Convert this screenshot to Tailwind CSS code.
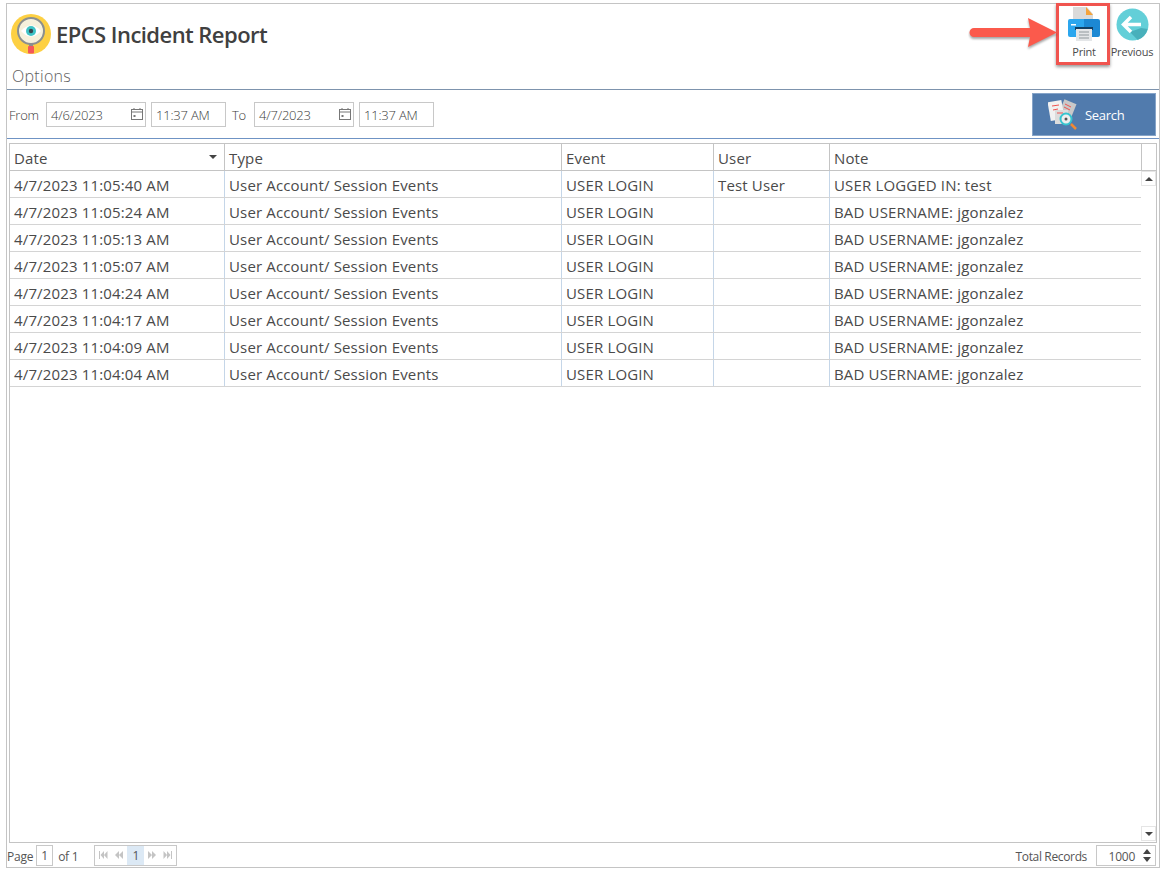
<!DOCTYPE html>
<html lang="en">
<head>
    <meta charset="UTF-8">
    <title>EPCS Incident Report</title>
    <script src="https://cdn.jsdelivr.net/npm/@tailwindcss/browser@4"></script>
</head>
<body class="bg-white font-['Open_Sans',sans-serif] text-[#4a4a4a] overflow-hidden">
<div class="relative w-[1164px] h-[874px] pt-[3px] pl-[6px] pr-[4px]">
    <div class="w-[1154px] h-[865px] border border-[#c4c4c4] flex flex-col">
        <!-- header -->
        <div class="h-[85px] shrink-0 flex justify-between">
            <div>
                <div class="flex items-center h-[50px] pt-[10px] pl-[4px]">
                    <svg class="w-[40px] h-[40px]" viewBox="0 0 40 40">
                        <circle cx="20" cy="20" r="20" fill="#fdd043"/>
                        <rect x="18" y="29" width="4" height="4" fill="#8b8f8f"/>
                        <rect x="17" y="32" width="6" height="7.500" rx="1" fill="#f4575a"/>
                        <circle cx="20" cy="17" r="13" fill="#f6f1dc" stroke="#8b8f8f" stroke-width="2"/>
                        <path d="M10 17q10-11 20 0q-10 11-20 0z" fill="#fff"/>
                        <circle cx="20" cy="17" r="5" fill="#3fc4c6"/>
                        <circle cx="20" cy="17" r="2.200" fill="#37474f"/>
                    </svg>
                    <h1 class="ml-[5px] text-[22px] leading-[30px] font-semibold text-[#404040] tracking-[-0.55px]">EPCS Incident Report</h1>
                </div>
                <div class="pl-[5px] mt-[11px] text-[16px] leading-[22px] font-light text-[#5e5e5e] tracking-[0.3px]">Options</div>
            </div>
            <div class="flex pr-[3px] pt-[1px]">
                <div class="w-[48px] flex flex-col items-center">
                    <svg class="w-[34px] h-[34px] mt-[2px]" viewBox="0 0 34 34">
                        <path d="M6 0h14l6 7v7H6z" fill="#dadada"/>
                        <path d="M19 0l7 8h-7z" fill="#f5a33b"/>
                        <path d="M3 12h14v18H3a2 2 0 0 1-2-2V14a2 2 0 0 1 2-2z" fill="#2ba6ee"/>
                        <path d="M17 12h14a2 2 0 0 1 2 2v14a2 2 0 0 1-2 2H17z" fill="#1c88d3"/>
                        <rect x="4" y="17" width="5" height="1.500" fill="#fff"/>
                        <rect x="8" y="20" width="18" height="3" fill="#123f63"/>
                        <rect x="9" y="22" width="16" height="12" fill="#e4e6e8"/>
                        <path d="M12 25h10M12 28h10M12 31h10" stroke="#8f979c" stroke-width="1.200"/>
                    </svg>
                    <span class="text-[11px] leading-[15px] mt-[3px] tracking-[-0.2px]">Print</span>
                </div>
                <div class="w-[48px] flex flex-col items-center">
                    <svg class="w-[33px] h-[33px] mt-[3px]" viewBox="0 0 33 33">
                        <circle cx="16.500" cy="16.500" r="16" fill="#63cfd8"/>
                        <path d="M14 24l11-4 6.700 1a16 16 0 0 1-10 11z" fill="#48b0bb"/>
                        <path d="M15 9l-7.500 7.500 7.500 7.500M8 16.500h17" fill="none" stroke="#fff" stroke-width="3.500"/>
                    </svg>
                    <span class="text-[11px] leading-[15px] mt-[3px] tracking-[-0.2px]">Previous</span>
                </div>
            </div>
        </div>
        <!-- filter row -->
        <div class="h-[50px] shrink-0 border-y border-t-[#7d93ad] border-b-[#6f93c4] flex items-center pl-[2px] text-[13px] font-light text-[#3c3c3c] tracking-[-0.2px]">
            <span class="w-[37px] pt-[3px]">From</span>
            <div class="w-[100px] h-[25px] border border-[#c8c8c8] flex items-center justify-between pl-[4px]">
                <span class="pt-[3px]">4/6/2023</span>
                <svg class="w-[14px] h-[14px] mr-[1px]" viewBox="0 0 14 14" fill="none" stroke="#777"><rect x="1.500" y="2.500" width="11" height="10"/><path d="M1.500 5h11M4 1v2M10 1v2"/><rect x="3.500" y="8" width="2" height="2" fill="#777" stroke="none"/></svg>
            </div>
            <div class="w-[75px] h-[25px] ml-[5px] border border-[#c8c8c8] flex items-center pl-[4px]"><span class="pt-[3px]">11:37 AM</span></div>
            <span class="w-[28px] pl-[6px] pt-[3px]">To</span>
            <div class="w-[100px] h-[25px] border border-[#c8c8c8] flex items-center justify-between pl-[4px]">
                <span class="pt-[3px]">4/7/2023</span>
                <svg class="w-[14px] h-[14px] mr-[1px]" viewBox="0 0 14 14" fill="none" stroke="#777"><rect x="1.500" y="2.500" width="11" height="10"/><path d="M1.500 5h11M4 1v2M10 1v2"/><rect x="3.500" y="8" width="2" height="2" fill="#777" stroke="none"/></svg>
            </div>
            <div class="w-[75px] h-[25px] ml-[5px] border border-[#c8c8c8] flex items-center pl-[4px]"><span class="pt-[3px]">11:37 AM</span></div>
            <div class="ml-auto mr-[3px] w-[124px] h-[43px] bg-[#517bad] border border-[#86a4c8] flex items-center text-white text-[13px] font-normal tracking-[-0.3px]">
                <svg class="w-[30px] h-[32px] ml-[15px]" viewBox="0 0 30 32">
                    <rect x="13" y="3" width="13" height="17" transform="rotate(22 19 11)" fill="#c9c9c9"/>
                    <path d="M17 6l6 3M16 9l6 3" stroke="#ef5350"/>
                    <rect x="1" y="3" width="14" height="19" transform="rotate(-10 8 12)" fill="#f1f1f1"/>
                    <path d="M4 8l7-1M5 12l5-1" stroke="#ef5350"/>
                    <rect x="7" y="12" width="13" height="14" fill="#dcdcdc"/>
                    <path d="M9 15h6" stroke="#ef5350"/>
                    <circle cx="18" cy="21" r="5.500" fill="#eee" stroke="#36c4cf" stroke-width="2"/>
                    <circle cx="18" cy="21" r="1.500" fill="#555"/>
                    <path d="M23 26l5 5" stroke="#f08a34" stroke-width="2.500"/>
                </svg>
                <span class="ml-[7px] pt-[3px]">Search</span>
            </div>
        </div>
        <!-- grid -->
        <div class="mt-[4px] mx-[2px] h-[700px] shrink-0 border border-[#c4c4c4] flex flex-col text-[15px] text-[#4a4a4a] tracking-[0.15px]">
            <div class="flex h-[27px] border-b border-[#c4c4c4] shrink-0">
                <div class="w-[215px] border-r border-[#c4c4c4] pl-[4px] pt-[2px] flex items-center justify-between pr-[7px]">Date <span class="w-0 h-0 mb-[2px] border-x-[4px] border-x-transparent border-t-[4px] border-t-[#444]"></span></div>
                <div class="w-[337px] border-r border-[#c4c4c4] pl-[4px] pt-[2px] flex items-center">Type</div>
                <div class="w-[152px] border-r border-[#c4c4c4] pl-[4px] pt-[2px] flex items-center">Event</div>
                <div class="w-[116px] border-r border-[#c4c4c4] pl-[4px] pt-[2px] flex items-center">User</div>
                <div class="w-[312px] border-r border-[#c4c4c4] pl-[4px] pt-[2px] flex items-center">Note</div>
            </div>
            <div class="flex flex-1 min-h-0">
                <div class="w-[1131px]">
                    <div class="flex h-[27px] border-b border-[#d4d4d4]">
                        <div class="w-[215px] border-r border-[#c5d6e8] pl-[4px] pt-[2px] flex items-center">4/7/2023 11:05:40 AM</div>
                        <div class="w-[337px] border-r border-[#c5d6e8] pl-[4px] pt-[2px] flex items-center">User Account/ Session Events</div>
                        <div class="w-[152px] border-r border-[#c5d6e8] pl-[4px] pt-[2px] flex items-center">USER LOGIN</div>
                        <div class="w-[116px] border-r border-[#c5d6e8] pl-[4px] pt-[2px] flex items-center">Test User</div>
                        <div class="w-[311px] pl-[4px] pt-[2px] flex items-center">USER LOGGED IN: test</div>
                    </div>
                    <div class="flex h-[27px] border-b border-[#d4d4d4]">
                        <div class="w-[215px] border-r border-[#c5d6e8] pl-[4px] pt-[2px] flex items-center">4/7/2023 11:05:24 AM</div>
                        <div class="w-[337px] border-r border-[#c5d6e8] pl-[4px] pt-[2px] flex items-center">User Account/ Session Events</div>
                        <div class="w-[152px] border-r border-[#c5d6e8] pl-[4px] pt-[2px] flex items-center">USER LOGIN</div>
                        <div class="w-[116px] border-r border-[#c5d6e8]"></div>
                        <div class="w-[311px] pl-[4px] pt-[2px] flex items-center">BAD USERNAME: jgonzalez</div>
                    </div>
                    <div class="flex h-[27px] border-b border-[#d4d4d4]">
                        <div class="w-[215px] border-r border-[#c5d6e8] pl-[4px] pt-[2px] flex items-center">4/7/2023 11:05:13 AM</div>
                        <div class="w-[337px] border-r border-[#c5d6e8] pl-[4px] pt-[2px] flex items-center">User Account/ Session Events</div>
                        <div class="w-[152px] border-r border-[#c5d6e8] pl-[4px] pt-[2px] flex items-center">USER LOGIN</div>
                        <div class="w-[116px] border-r border-[#c5d6e8]"></div>
                        <div class="w-[311px] pl-[4px] pt-[2px] flex items-center">BAD USERNAME: jgonzalez</div>
                    </div>
                    <div class="flex h-[27px] border-b border-[#d4d4d4]">
                        <div class="w-[215px] border-r border-[#c5d6e8] pl-[4px] pt-[2px] flex items-center">4/7/2023 11:05:07 AM</div>
                        <div class="w-[337px] border-r border-[#c5d6e8] pl-[4px] pt-[2px] flex items-center">User Account/ Session Events</div>
                        <div class="w-[152px] border-r border-[#c5d6e8] pl-[4px] pt-[2px] flex items-center">USER LOGIN</div>
                        <div class="w-[116px] border-r border-[#c5d6e8]"></div>
                        <div class="w-[311px] pl-[4px] pt-[2px] flex items-center">BAD USERNAME: jgonzalez</div>
                    </div>
                    <div class="flex h-[27px] border-b border-[#d4d4d4]">
                        <div class="w-[215px] border-r border-[#c5d6e8] pl-[4px] pt-[2px] flex items-center">4/7/2023 11:04:24 AM</div>
                        <div class="w-[337px] border-r border-[#c5d6e8] pl-[4px] pt-[2px] flex items-center">User Account/ Session Events</div>
                        <div class="w-[152px] border-r border-[#c5d6e8] pl-[4px] pt-[2px] flex items-center">USER LOGIN</div>
                        <div class="w-[116px] border-r border-[#c5d6e8]"></div>
                        <div class="w-[311px] pl-[4px] pt-[2px] flex items-center">BAD USERNAME: jgonzalez</div>
                    </div>
                    <div class="flex h-[27px] border-b border-[#d4d4d4]">
                        <div class="w-[215px] border-r border-[#c5d6e8] pl-[4px] pt-[2px] flex items-center">4/7/2023 11:04:17 AM</div>
                        <div class="w-[337px] border-r border-[#c5d6e8] pl-[4px] pt-[2px] flex items-center">User Account/ Session Events</div>
                        <div class="w-[152px] border-r border-[#c5d6e8] pl-[4px] pt-[2px] flex items-center">USER LOGIN</div>
                        <div class="w-[116px] border-r border-[#c5d6e8]"></div>
                        <div class="w-[311px] pl-[4px] pt-[2px] flex items-center">BAD USERNAME: jgonzalez</div>
                    </div>
                    <div class="flex h-[27px] border-b border-[#d4d4d4]">
                        <div class="w-[215px] border-r border-[#c5d6e8] pl-[4px] pt-[2px] flex items-center">4/7/2023 11:04:09 AM</div>
                        <div class="w-[337px] border-r border-[#c5d6e8] pl-[4px] pt-[2px] flex items-center">User Account/ Session Events</div>
                        <div class="w-[152px] border-r border-[#c5d6e8] pl-[4px] pt-[2px] flex items-center">USER LOGIN</div>
                        <div class="w-[116px] border-r border-[#c5d6e8]"></div>
                        <div class="w-[311px] pl-[4px] pt-[2px] flex items-center">BAD USERNAME: jgonzalez</div>
                    </div>
                    <div class="flex h-[27px] border-b border-[#d4d4d4]">
                        <div class="w-[215px] border-r border-[#c5d6e8] pl-[4px] pt-[2px] flex items-center">4/7/2023 11:04:04 AM</div>
                        <div class="w-[337px] border-r border-[#c5d6e8] pl-[4px] pt-[2px] flex items-center">User Account/ Session Events</div>
                        <div class="w-[152px] border-r border-[#c5d6e8] pl-[4px] pt-[2px] flex items-center">USER LOGIN</div>
                        <div class="w-[116px] border-r border-[#c5d6e8]"></div>
                        <div class="w-[311px] pl-[4px] pt-[2px] flex items-center">BAD USERNAME: jgonzalez</div>
                    </div>
                </div>
                <div class="flex-1 flex flex-col justify-between items-end pr-[2px] pb-[1px]">
                    <div class="w-[15px] h-[15px] border border-[#e5e5e5] flex items-center justify-center"><span class="w-0 h-0 border-x-[4px] border-x-transparent border-b-[4px] border-b-[#444]"></span></div>
                    <div class="w-[15px] h-[15px] border border-[#e5e5e5] flex items-center justify-center"><span class="w-0 h-0 border-x-[4px] border-x-transparent border-t-[4px] border-t-[#444]"></span></div>
                </div>
            </div>
        </div>
        <!-- footer -->
        <div class="flex-1 flex items-center text-[12px] text-[#555] tracking-[-0.25px] pr-[3px]">
            <span class="pt-[3px]">Page</span>
            <div class="ml-[3px] w-[17px] h-[21px] border border-[#c8c8c8] flex items-center justify-center"><span class="pt-[2px]">1</span></div>
            <span class="ml-[5px] pt-[3px]">of 1</span>
            <div class="ml-[16px] h-[21px] w-[83px] border border-[#c8c8c8] flex items-center">
                <svg class="w-[16px] h-[8px]" viewBox="0 0 16 8" fill="#c4c4c4"><path d="M4 0h1v8H4zM9 0v8L5.500 4zM12.500 0v8L9 4z"/></svg>
                <svg class="w-[16px] h-[8px]" viewBox="0 0 16 8" fill="#c4c4c4"><path d="M8 0v8L4 4zM12 0v8L8 4z"/></svg>
                <span class="w-[17px] h-full bg-[#dce9f5] flex items-center justify-center text-[#555]"><span class="pt-[2px]">1</span></span>
                <svg class="w-[16px] h-[8px]" viewBox="0 0 16 8" fill="#c4c4c4"><path d="M4 0v8l4-4zM8 0v8l4-4z"/></svg>
                <svg class="w-[16px] h-[8px]" viewBox="0 0 16 8" fill="#c4c4c4"><path d="M3.500 0v8L7 4zM7 0v8l3.500-4zM11 0h1v8h-1z"/></svg>
            </div>
            <span class="ml-auto mr-[9px] pt-[3px] tracking-[-0.35px]">Total Records</span>
            <div class="w-[60px] h-[21px] border border-[#c8c8c8] flex items-center justify-end pr-[4px]">
                <span class="pt-[3px]">1000</span>
                <div class="ml-[8px] flex flex-col gap-[3px]">
                    <span class="block w-0 h-0 border-x-[4px] border-x-transparent border-b-[5px] border-b-[#444]"></span>
                    <span class="block w-0 h-0 border-x-[4px] border-x-transparent border-t-[5px] border-t-[#444]"></span>
                </div>
            </div>
        </div>
    </div>
    <!-- annotation over the screenshot -->
    <div class="absolute left-[1056px] top-[3px] w-[54px] h-[62px] border-[3px] border-[#f0544f] shadow-[0_2px_3px_rgba(0,0,0,0.4)]"></div>
    <svg class="absolute left-[968px] top-[16px] w-[90px] h-[36px]" viewBox="0 0 90 36">
        <path d="M6 12H62L60 2 89 16.500 60 31 62 21H6a4.500 4.500 0 0 1 0-9z" fill="#fb5a4c" style="filter:drop-shadow(0 2px 1px rgba(0,0,0,.35))"/>
    </svg>
</div>
</body>
</html>
